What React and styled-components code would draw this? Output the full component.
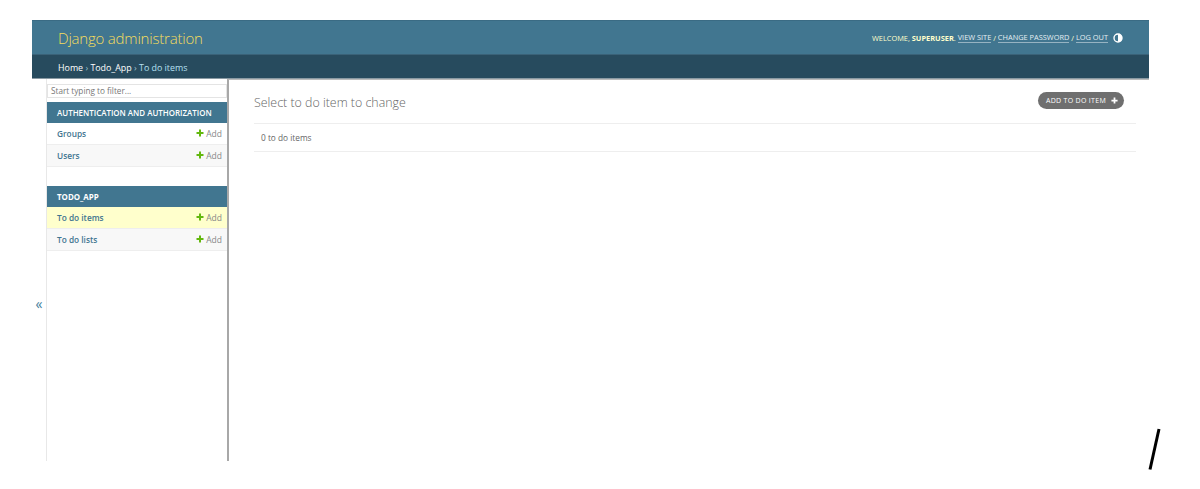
import styled, { createGlobalStyle } from "styled-components";

const GlobalStyle = createGlobalStyle`
  html, body {
    margin: 0;
    padding: 0;
    background: #fff;
    font-family: "Open Sans", "Noto Sans", sans-serif;
  }
`;

const Page = styled.div`
  position: relative;
  width: 1200px;
  height: 489px;
  padding: 20px 51px 28px 32px;
  box-sizing: border-box;
  display: flex;
  flex-direction: column;
  overflow: hidden;
`;
const Header = styled.header`
  height: 34px;
  flex: none;
  background: #417690;
  border-top: 1px solid #3a6b84;
  box-sizing: border-box;
  display: flex;
  align-items: center;
  justify-content: space-between;
  padding: 0 26px 0 26px;
`;
const Branding = styled.div`
  color: #f5dd5d;
  font-size: 15px;
  font-weight: 300;
  letter-spacing: -0.2px;
  padding-top: 1px;
`;
const UserTools = styled.div`
  display: flex;
  align-items: center;
  color: #ffc;
  font-size: 7.4px;
  text-transform: uppercase;
  white-space: pre;
`;
const ToolLink = styled.span`
  color: #e4eef2;
  border-bottom: 1px solid rgba(255, 255, 255, 0.45);
  line-height: 10px;
`;
const ThemeToggle = styled.svg`
  width: 10px;
  height: 10px;
  margin-left: 5px;
`;
const Breadcrumbs = styled.nav`
  height: 25px;
  flex: none;
  background: #274b5e;
  border-top: 1px solid #3a6278;
  border-bottom: 1px solid #8a9aa3;
  box-sizing: border-box;
  display: flex;
  align-items: center;
  padding: 2px 0 0 26px;
  font-size: 8.9px;
  color: #9fc1d0;
  white-space: pre;
`;
const Crumb = styled.span`
  color: ${(props) => (props.$current ? "#b5e0f2" : "#fff")};
`;
const Body = styled.div`
  flex: 1;
  display: flex;
  min-height: 0;
`;
const ToggleColumn = styled.div`
  width: 14px;
  flex: none;
  color: #447e9b;
  font-size: 14px;
  display: flex;
  align-items: center;
  justify-content: center;
  padding-top: 66px;
  box-sizing: border-box;
`;
const Sidebar = styled.aside`
  width: 181px;
  flex: none;
  border-left: 1px solid #e8e8e8;
  box-sizing: border-box;
  padding-top: 5px;
`;
const FilterInput = styled.div`
  height: 14px;
  margin-bottom: 4px;
  padding-left: 3px;
  border: 1px solid #e4e4e4;
  box-sizing: border-box;
  font-size: 8.2px;
  line-height: 12px;
  color: #777;
`;
const ModuleBlock = styled.section`
  margin-bottom: 19px;
`;
const Caption = styled.div`
  height: 21px;
  background: #417690;
  color: #fff;
  font-size: 7.95px;
  font-weight: ${(props) => (props.$bold ? 700 : 600)};
  padding-left: 10px;
  display: flex;
  align-items: center;
`;
const Row = styled.div`
  height: 22px;
  box-sizing: border-box;
  background: ${(props) => props.$bg};
  border-bottom: 1px solid #eee;
  padding: 0 5px 0 10px;
  display: flex;
  align-items: center;
  justify-content: space-between;
  font-size: 8.3px;
`;
const ModelName = styled.span`
  color: #3f7590;
  font-weight: 600;
`;
const AddLink = styled.span`
  display: flex;
  align-items: center;
  gap: 2px;
  font-size: 8.5px;
  color: #888;
`;
const PlusIcon = styled.svg`
  width: ${(props) => props.$size || 8}px;
  height: ${(props) => props.$size || 8}px;
  flex: none;
  margin-bottom: ${(props) => (props.$raised ? 1 : 0)}px;
`;
const Main = styled.main`
  flex: 1;
  min-width: 0;
  background: #fff;
  border-left: 2px solid #a8a8a8;
  border-top: 1px solid #bbb;
  padding: 0 13px 0 25px;
`;
const TitleRow = styled.div`
  height: 44px;
  display: flex;
  align-items: center;
  justify-content: space-between;
  border-bottom: 1px solid #eee;
  box-sizing: border-box;
`;
const Title = styled.h1`
  margin: 0;
  padding-top: 2px;
  font-size: 12.4px;
  font-weight: 300;
  color: #666;
`;
const AddButton = styled.div`
  height: 17px;
  margin: 0 12px 2px 0;
  padding: 0 6px 0 8px;
  border-radius: 9px;
  background: #6f6f6f;
  color: #fff;
  font-size: 7px;
  letter-spacing: 0.3px;
  display: flex;
  align-items: center;
  gap: 5px;
`;
const ResultBar = styled.div`
  height: 28px;
  box-sizing: border-box;
  padding-left: 7px;
  border-bottom: 1px solid #eee;
  display: flex;
  align-items: center;
  font-size: 8.3px;
  color: #666;
`;
const Slash = styled.svg`
  position: absolute;
  left: 1145px;
  top: 425px;
  width: 18px;
  height: 48px;
`;

function Plus({ color, size, raised }) {
  return (
    <PlusIcon viewBox="0 0 8 8" $size={size} $raised={raised}>
      <path d="M4 .5v7M.5 4h7" stroke={color} strokeWidth="2" />
    </PlusIcon>
  );
}

function ModelRow({ name, bg }) {
  return (
    <Row $bg={bg}>
      <ModelName>{name}</ModelName>
      <AddLink>
        <Plus color="#63b80e" raised />
        Add
      </AddLink>
    </Row>
  );
}

export default function App() {
  return (
    <Page>
      <GlobalStyle />
      <Header>
        <Branding>Django administration</Branding>
        <UserTools>
          Welcome, <b>superuser</b>.{" "}
          <ToolLink>View site</ToolLink> / <ToolLink>Change password</ToolLink> /{" "}
          <ToolLink>Log out</ToolLink>
          <ThemeToggle viewBox="0 0 10 10">
            <circle cx="5" cy="5" r="4" fill="#417690" stroke="#fff" strokeWidth="1.4" />
            <path d="M5 1a4 4 0 0 1 0 8z" fill="#fff" />
          </ThemeToggle>
        </UserTools>
      </Header>
      <Breadcrumbs>
        <Crumb>Home</Crumb> › <Crumb>Todo_App</Crumb> › <Crumb $current>To do items</Crumb>
      </Breadcrumbs>
      <Body>
        <ToggleColumn>«</ToggleColumn>
        <Sidebar>
          <FilterInput>Start typing to filter...</FilterInput>
          <ModuleBlock>
            <Caption>AUTHENTICATION AND AUTHORIZATION</Caption>
            <ModelRow name="Groups" bg="#fff" />
            <ModelRow name="Users" bg="#f8f8f8" />
          </ModuleBlock>
          <ModuleBlock>
            <Caption $bold>TODO_APP</Caption>
            <ModelRow name="To do items" bg="#ffc" />
            <ModelRow name="To do lists" bg="#f8f8f8" />
          </ModuleBlock>
        </Sidebar>
        <Main>
          <TitleRow>
            <Title>Select to do item to change</Title>
            <AddButton>
              ADD TO DO ITEM
              <Plus color="#fff" size={7} />
            </AddButton>
          </TitleRow>
          <ResultBar>0 to do items</ResultBar>
        </Main>
      </Body>
      <Slash viewBox="0 0 18 48">
        <path d="M14 4 5 44.5" stroke="#000" strokeWidth="3" />
      </Slash>
    </Page>
  );
}
